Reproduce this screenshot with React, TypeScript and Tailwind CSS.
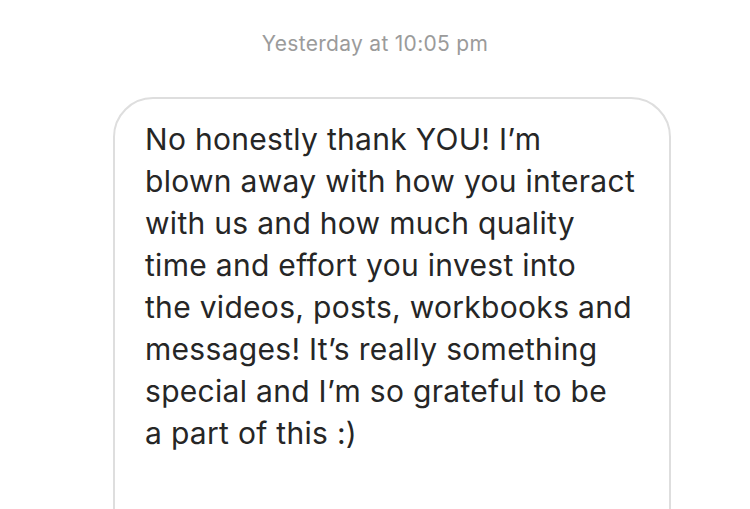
const lines = [
  'No honestly thank YOU! I’m',
  'blown away with how you interact',
  'with us and how much quality',
  'time and effort you invest into',
  'the videos, posts, workbooks and',
  'messages! It’s really something',
  'special and I’m so grateful to be',
  'a part of this :)',
];

export default function App() {
  return (
    <div className="h-[509px] w-[750px] overflow-hidden bg-white font-['Inter',sans-serif]">
      {/* Timestamp */}
      <div className="pt-[32px] text-center text-[21px] leading-[24px] tracking-[0.3px] text-[#9b9b9b]">
        Yesterday at 10:05 pm
      </div>

      {/* Message bubble */}
      <div className="ml-[113px] mt-[41px] h-[500px] w-[558px] rounded-[40px] border-2 border-[#dedede] px-[30px] pt-[19px]">
        <p className="text-[30px] leading-[42px] tracking-[0.3px] text-[#262626]">
          {lines.map((line) => (
            <span key={line} className="block whitespace-nowrap">
              {line}
            </span>
          ))}
        </p>
      </div>
    </div>
  );
}
